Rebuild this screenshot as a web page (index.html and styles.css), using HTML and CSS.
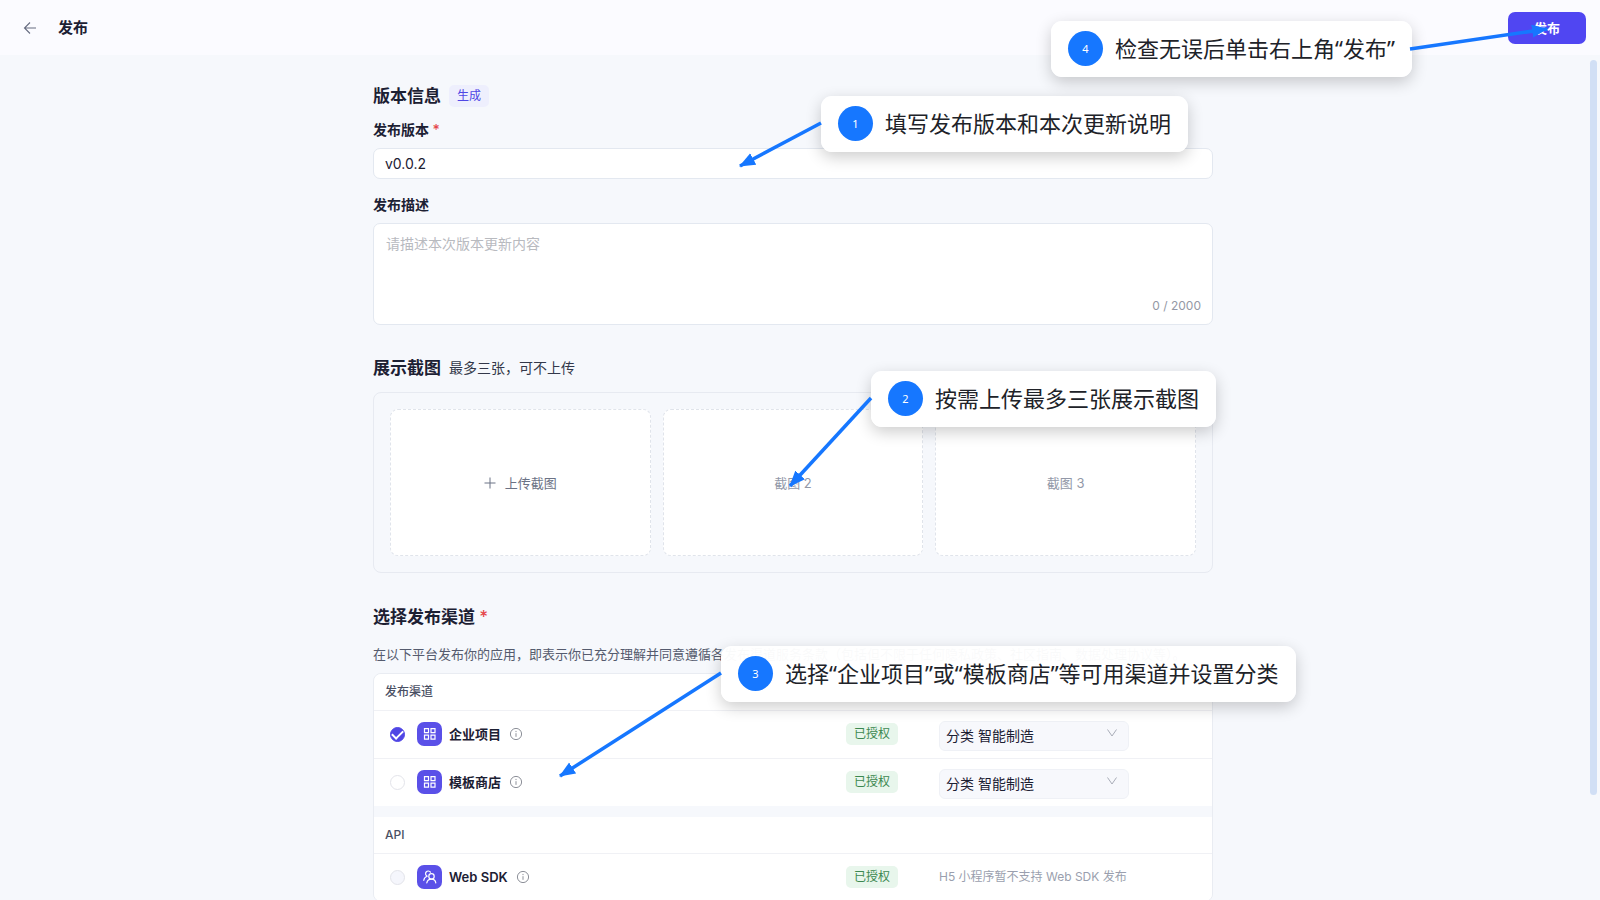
FILE: index.html
```html
<!DOCTYPE html>
<html lang="zh-CN">
<head>
<meta charset="utf-8">
<title>发布</title>
<link rel="stylesheet" href="styles.css">
</head>
<body>
<svg class="sprite" aria-hidden="true">
  <symbol id="info" viewBox="0 0 14 14"><circle cx="7" cy="7" r="5.6" fill="none" stroke="currentColor"/><path d="M7 6.2v3.6M7 3.9v1.2" stroke="currentColor"/></symbol>
  <symbol id="grid" viewBox="0 0 24 24"><path d="M7 6.700h4v4H7zM13.500 6.700h4v4h-4zM7 13.200h4v4H7zM13.500 13.200h4v4h-4z" fill="none" stroke="#fff" stroke-width="1.200"/></symbol>
  <symbol id="people" viewBox="0 0 24 24"><g fill="none" stroke="#fff" stroke-width="1.200" stroke-linecap="round"><circle cx="14" cy="11.400" r="2.700"/><path d="M9.300 17.800c.5-2.200 2.300-3.700 4.700-3.700s3.900 1.500 4.300 3.700M9.700 11.200A2.700 2.700 0 1 1 13 7.200M6.300 15.300c.2-2 1.500-3.500 3.400-4.100"/></g></symbol>
  <symbol id="chevron" viewBox="0 0 12 12"><path d="M1.500 2.500 6 9l4.500-6.500" fill="none" stroke="currentColor"/></symbol>
</svg>
<div class="app">
  <header class="topbar">
    <button class="back" type="button" aria-label="返回"><svg viewBox="0 0 14 14"><path d="M13 7H1.500M7 1.500 1.500 7 7 12.500" fill="none" stroke="currentColor" stroke-width="1.100"/></svg></button>
    <h1>发布</h1>
    <button class="publish" type="submit" form="release">发布</button>
  </header>
  <div class="body">
    <main class="scroll">
      <form class="form" id="release">
        <section class="version">
          <div class="title"><h2>版本信息</h2><button class="generate" type="button">生成</button></div>
          <label class="label" for="ver">发布版本 <span class="req">*</span></label>
          <input class="text" id="ver" type="text" value="v0.0.2">
          <label class="label desc-label" for="desc">发布描述</label>
          <div class="area">
            <textarea id="desc" placeholder="请描述本次版本更新内容"></textarea>
            <span class="count">0 / 2000</span>
          </div>
        </section>
        <section class="shots-section">
          <div class="title"><h2>展示截图</h2><span class="sub">最多三张，可不上传</span></div>
          <div class="shots">
            <button class="shot upload" type="button"><svg viewBox="0 0 12 12"><path d="M6 .5v11M.5 6h11" stroke="currentColor"/></svg>上传截图</button>
            <div class="shot">截图 2</div>
            <div class="shot">截图 3</div>
          </div>
        </section>
        <section class="channels">
          <div class="title"><h2>选择发布渠道 <span class="req">*</span></h2></div>
          <p class="terms">在以下平台发布你的应用，即表示你已充分理解并同意遵循各发布渠道服务条款（包括但不限于任何隐私政策、社区指南、数据处理协议等）。</p>
          <div class="panel">
            <table>
              <colgroup><col class="c-name"><col class="c-state"><col></colgroup>
              <thead><tr><th colspan="3" scope="colgroup">发布渠道</th></tr></thead>
              <tbody>
                <tr>
                  <td><div class="name"><input type="checkbox" id="c1" checked><svg class="logo"><use href="#grid"/></svg><label for="c1">企业项目</label><svg class="info"><use href="#info"/></svg></div></td>
                  <td><span class="tag">已授权</span></td>
                  <td class="pick"><div class="select"><select aria-label="企业项目分类"><option>分类 智能制造</option></select><svg><use href="#chevron"/></svg></div></td>
                </tr>
                <tr>
                  <td><div class="name"><input type="checkbox" id="c2"><svg class="logo"><use href="#grid"/></svg><label for="c2">模板商店</label><svg class="info"><use href="#info"/></svg></div></td>
                  <td><span class="tag">已授权</span></td>
                  <td class="pick"><div class="select"><select aria-label="模板商店分类"><option>分类 智能制造</option></select><svg><use href="#chevron"/></svg></div></td>
                </tr>
              </tbody>
            </table>
            <table>
              <colgroup><col class="c-name"><col class="c-state"><col></colgroup>
              <thead><tr><th colspan="3" scope="colgroup">API</th></tr></thead>
              <tbody>
                <tr>
                  <td><div class="name"><input type="checkbox" id="c3" disabled><svg class="logo"><use href="#people"/></svg><label for="c3">Web SDK</label><svg class="info"><use href="#info"/></svg></div></td>
                  <td><span class="tag">已授权</span></td>
                  <td class="note">H5 小程序暂不支持 Web SDK 发布</td>
                </tr>
              </tbody>
            </table>
          </div>
        </section>
      </form>
    </main>
    <div class="rail"><div class="thumb"></div></div>
  </div>
</div>
<div class="guide">
  <div class="callout one"><b>1</b>填写发布版本和本次更新说明</div>
  <div class="callout two"><b>2</b>按需上传最多三张展示截图</div>
  <div class="callout three"><b>3</b>选择“企业项目”或“模板商店”等可用渠道并设置分类</div>
  <div class="callout four"><b>4</b>检查无误后单击右上角“发布”</div>
  <svg class="arrows" aria-hidden="true">
    <defs><marker id="head" markerUnits="userSpaceOnUse" markerWidth="16" markerHeight="14" refX="15" refY="7" orient="auto"><path d="M0 .5 16 7 0 13.500z" fill="#1677ff"/></marker></defs>
    <g stroke="#1677ff" stroke-width="3.500">
      <path d="M821 123 740 166" marker-end="url(#head)"/>
      <path d="M871 398 790 486" marker-end="url(#head)"/>
      <path d="M721 673 560 776" marker-end="url(#head)"/>
      <path d="M1410 49 1547 29" marker-end="url(#head)"/>
    </g>
  </svg>
</div>
</body>
</html>
```
FILE: styles.css
```css
* { box-sizing: border-box; }
body {
  margin: 0;
  overflow: hidden;
  background: #f6f8fc;
  color: #1c2033;
  font: 14px/20px Inter, "Noto Sans CJK SC", sans-serif;
}
button, input, textarea, select { font: inherit; color: inherit; }
h1, h2, p { margin: 0; }
.sprite { display: none; }
.app { display: flex; flex-direction: column; height: 100vh; }

.topbar {
  display: flex;
  flex: none;
  align-items: center;
  height: 55px;
  padding: 0 14px 0 23px;
  background: #fbfbff;
}
.back { display: flex; width: 14px; height: 14px; padding: 0; border: 0; background: none; color: #666c80; }
.back svg { width: 14px; height: 14px; }
.topbar h1 { margin-left: 21px; font-size: 15px; font-weight: 600; }
.publish {
  width: 78px;
  height: 32px;
  margin-left: auto;
  border: 0;
  border-radius: 7px;
  background: #5046f2;
  color: #fff;
  font-size: 13px;
  font-weight: 600;
}

.body { display: flex; flex: 1; min-height: 0; }
.scroll { flex: 1; min-width: 0; overflow: hidden; }
.rail { width: 14px; padding: 5px 3px 0 4px; }
.thumb { height: 87.5%; border-radius: 4px; background: #d1dff5; }
.form { max-width: 840px; margin: 0 auto; padding-top: 30px; }

.title { display: flex; align-items: center; gap: 8px; height: 22px; }
h2 { font-size: 17px; font-weight: 600; line-height: 22px; }
.generate {
  height: 22px;
  padding: 0 8px;
  border: 0;
  border-radius: 5px;
  background: #eeeffd;
  color: #5046e5;
  font-size: 12px;
}
.label { display: block; margin: 13px 0 8px; font-weight: 600; }
.desc-label { margin: 16px 0 8px; }
.req { color: #e5484d; font-weight: 500; }
.text, .area { border: 1px solid #e3e8f0; border-radius: 7px; background: #fff; }
.text { display: block; width: 100%; height: 31px; padding: 0 11px; outline: 0; }
.area { display: flex; flex-direction: column; height: 102px; padding: 10px 11px 8px 12px; }
.area textarea { flex: 1; padding: 0; border: 0; outline: 0; resize: none; background: none; }
.area textarea::placeholder { color: #b8babf; }
.count { align-self: flex-end; color: #9498a5; font-size: 12px; }

.shots-section { margin-top: 32px; }
.sub { color: #33384a; }
.shots {
  display: grid;
  grid-template-columns: repeat(3, 1fr);
  gap: 12px;
  margin-top: 13px;
  padding: 16px;
  border: 1px solid #e7eaf1;
  border-radius: 8px;
}
.shot {
  display: flex;
  align-items: center;
  justify-content: center;
  height: 147px;
  border: 1px dashed #e0e4eb;
  border-radius: 8px;
  background: #fff;
  color: #9298a8;
  font-size: 13px;
}
.upload { gap: 9px; color: #6b7285; }
.upload svg { width: 12px; height: 12px; }

.channels { margin-top: 33px; }
.terms { margin: 16px 0 9px; color: #555b6e; font-size: 13px; white-space: nowrap; }
.panel { border: 1px solid #e9ecf2; border-radius: 8px; overflow: hidden; }
table { width: 100%; border-collapse: collapse; table-layout: fixed; background: #fff; }
table + table { margin-top: 11px; }
.c-name { width: 472px; }
.c-state { width: 93px; }
th { height: 36px; padding: 0 11px; color: #4a5064; font-size: 12px; font-weight: 500; text-align: left; }
td { height: 48px; padding: 0; border-top: 1px solid #f0f1f5; vertical-align: middle; }
.name { display: flex; align-items: center; padding-left: 16px; }
.name input {
  width: 15px;
  height: 15px;
  margin: 0 12px 0 0;
  appearance: none;
  border: 1px solid #e3e4ea;
  border-radius: 50%;
  background: #fff;
}
.name input:disabled { background: #f5f6fc; }
.name input:checked { display: grid; place-items: center; border-color: #5046e5; background: #5046e5; }
.name input:checked::after {
  content: "";
  width: 9px;
  height: 5px;
  border: solid #fff;
  border-width: 0 0 2px 2px;
  transform: translateY(-1px) rotate(-45deg);
}
.name .logo { width: 25px; height: 24px; margin-right: 7px; border-radius: 7px; background: #5a50e8; }
.name label { font-size: 13px; font-weight: 600; }
.info { width: 14px; height: 14px; margin-left: 8px; color: #8d9099; }
.tag {
  display: inline-block;
  padding: 1px 8px;
  border-radius: 5px;
  background: #e8f6ec;
  color: #3c8850;
  font-size: 12px;
}
.pick { padding-top: 3px; }
.select { display: grid; width: 190px; }
.select > * { grid-area: 1 / 1; }
.select select {
  width: 100%;
  height: 30px;
  padding: 0 6px;
  appearance: none;
  border: 1px solid #eff1f6;
  border-radius: 6px;
  background: #f7f8fc;
}
.select svg { justify-self: end; width: 12px; height: 12px; margin: 6px 11px; color: #a9adb8; pointer-events: none; }
.note { color: #9a9fae; font-size: 12px; }

/* Step callouts float above the page */
.guide { position: absolute; inset: 0; pointer-events: none; }
.arrows { position: absolute; inset: 0; width: 100%; height: 100%; }
.callout {
  position: absolute;
  display: flex;
  align-items: center;
  height: 56px;
  padding: 0 17px 2px;
  border-radius: 11px;
  background: rgba(255, 255, 255, .97);
  box-shadow: 0 5px 16px rgba(0, 0, 0, .2);
  color: #202228;
  font: 400 22px/30px "Noto Sans", "Noto Sans CJK SC", sans-serif;
  white-space: nowrap;
}
.callout b {
  width: 35px;
  margin-right: 12px;
  border-radius: 50%;
  background: #1677ff;
  color: #fff;
  font-size: 11px;
  font-weight: 400;
  line-height: 35px;
  text-align: center;
}
.one { left: 821px; top: 96px; }
.two { left: 871px; top: 371px; }
.three { left: 721px; top: 646px; }
.four { left: 1051px; top: 21px; }
```
